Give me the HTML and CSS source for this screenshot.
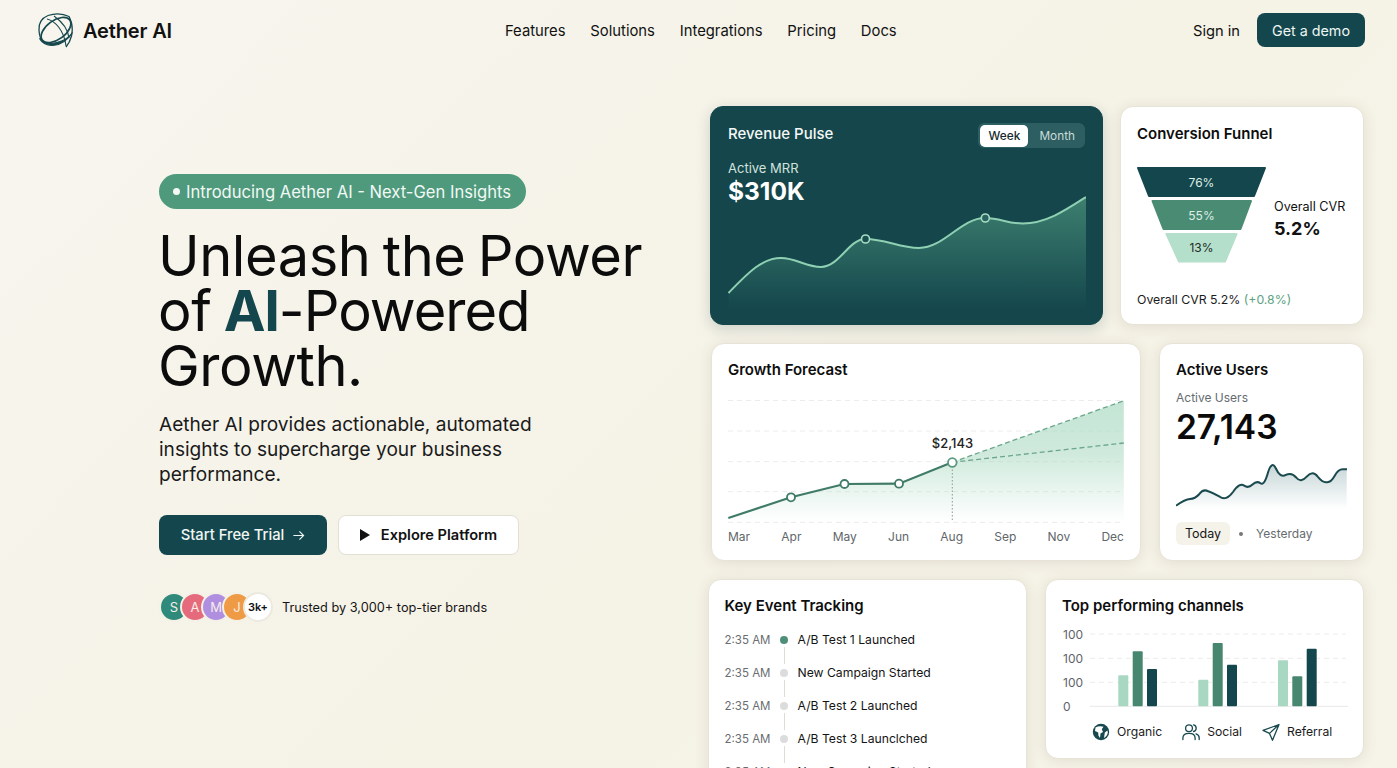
FILE: index.html
```html
<!DOCTYPE html>
<html lang="en">
<head>
<meta charset="utf-8">
<title>Aether AI</title>
<link rel="stylesheet" href="styles.css">
</head>
<body>
<div class="page">
  <header class="topbar">
    <a class="brand">
      <svg class="brand-mark" viewBox="0 0 38 36" fill="none" stroke="#17484e">
        <path d="M11 3.500C5 6 1.500 11 2 18C2.200 22 3 26 5 29" stroke-width="1.300"/>
        <path d="M11 3.500C17 1.500 25 1 32 4.500C35 10 36 17 34.500 24C33.500 28 31.500 32 29 35" stroke-width="1.300"/>
        <ellipse cx="19" cy="18" rx="17" ry="9.500" stroke-width="1.700" transform="rotate(-36 19 18)"/>
        <path d="M10 7C18 9 27 18 29 34M17 4C24 9 31 17 32 26" stroke-width="1.100"/>
        <path d="M2.500 26.500C8 36 25 37 35.500 20.500C28 31 13 33.500 6 29.500Z" fill="#17484e" stroke-width="1.200"/>
      </svg>
      <span class="brand-name">Aether AI</span>
    </a>
    <nav class="nav">
      <a>Features</a><a>Solutions</a><a>Integrations</a><a>Pricing</a><a>Docs</a>
    </nav>
    <div class="top-actions">
      <a class="signin">Sign in</a>
      <a class="demo">Get a demo</a>
    </div>
  </header>

  <main class="main">
    <section class="hero">
      <div class="pill"><span class="pill-dot"></span>Introducing Aether AI - Next-Gen Insights</div>
      <h1 class="headline">Unleash the Power<br>of <strong>AI</strong><span class="tight">-Powered</span><br>Growth.</h1>
      <p class="lede">Aether AI provides actionable, automated insights to supercharge your business performance.</p>
      <div class="cta">
        <a class="btn btn-dark">Start Free Trial
          <svg class="btn-arrow" viewBox="0 0 14 14" fill="none" stroke="currentColor" stroke-width="1.2"><path d="M1.5 7h11M8 2.500 12.500 7 8 11.500"/></svg>
        </a>
        <a class="btn btn-light">
          <svg class="btn-play" viewBox="0 0 10 12"><path d="M0 0l10 6-10 6z" fill="#111"/></svg>
          Explore Platform</a>
      </div>
      <div class="trust">
        <div class="avatars">
          <span class="avatar av-s">S</span><span class="avatar av-a">A</span><span class="avatar av-m">M</span><span class="avatar av-j">J</span><span class="avatar av-more">3k+</span>
        </div>
        <span class="trust-text">Trusted by 3,000+ top-tier brands</span>
      </div>
    </section>

    <section class="board">
      <div class="row row-1">
        <article class="card card-dark">
          <div class="rev-head">
            <h2 class="card-title">Revenue Pulse</h2>
            <div class="toggle"><span class="toggle-on">Week</span><span class="toggle-off">Month</span></div>
          </div>
          <div class="rev-label">Active MRR</div>
          <div class="rev-value">$310K</div>
          <svg class="rev-chart" viewBox="727 190 358 125" fill="none">
            <defs>
              <linearGradient id="revFill" x1="0" y1="0" x2="0" y2="1">
                <stop offset="0" stop-color="#5fae8c" stop-opacity=".55"/>
                <stop offset="1" stop-color="#5fae8c" stop-opacity="0"/>
              </linearGradient>
            </defs>
            <path fill="url(#revFill)" d="M727.5 293C745 275 760 258 780 258C795 258 805 267 820 267C838 267 848 239 864.3 239C885 239 898 248 918 248C943 248 960 218 984 218C1000 218 1005 223.5 1021.7 223.5C1045 223.5 1065 210 1085 197V310H727.5Z"/>
            <path stroke="#8fd0b3" stroke-width="2" d="M727.5 293C745 275 760 258 780 258C795 258 805 267 820 267C838 267 848 239 864.3 239C885 239 898 248 918 248C943 248 960 218 984 218C1000 218 1005 223.5 1021.7 223.5C1045 223.5 1065 210 1085 197"/>
            <circle cx="864.5" cy="239" r="4" fill="#17504f" stroke="#a8dcc4" stroke-width="1.6"/>
            <circle cx="984.3" cy="218" r="4" fill="#2a6360" stroke="#a8dcc4" stroke-width="1.6"/>
          </svg>
        </article>
        <article class="card card-funnel">
          <h2 class="card-title">Conversion Funnel</h2>
          <div class="funnel-body">
            <svg class="funnel" viewBox="1136 166 131 97">
              <path class="fn-1" d="M1138 168H1265L1254 196H1149Z"/>
              <path class="fn-2" d="M1152.500 201H1251L1240.500 229H1163.500Z"/>
              <path class="fn-3" d="M1166.500 234H1236.500L1225 261.500H1179Z"/>
              <text class="fn-text fn-light" x="1201.500" y="186.500">76%</text>
              <text class="fn-text fn-light" x="1201.500" y="219.500">55%</text>
              <text class="fn-text" x="1201.500" y="252">13%</text>
            </svg>
            <div class="funnel-side">
              <div class="funnel-side-label">Overall CVR</div>
              <div class="funnel-side-value">5.2%</div>
            </div>
          </div>
          <div class="funnel-foot">Overall CVR 5.2% <span class="up">(+0.8%)</span></div>
        </article>
      </div>

      <div class="row row-2">
        <article class="card card-forecast">
          <h2 class="card-title">Growth Forecast</h2>
          <svg class="fc-chart" viewBox="728 396 396 128" fill="none">
            <defs>
              <linearGradient id="fcFill" gradientUnits="userSpaceOnUse" x1="0" y1="400" x2="0" y2="522">
                <stop offset="0" stop-color="#a9d9c1" stop-opacity=".7"/>
                <stop offset=".45" stop-color="#a9d9c1" stop-opacity=".55"/>
                <stop offset="1" stop-color="#a9d9c1" stop-opacity="0"/>
              </linearGradient>
            </defs>
            <g class="fc-grid">
              <path d="M728 400.500H1124M728 431H1124M728 461.700H1124M728 491.700H1124M728 522.300H1124"/>
            </g>
            <path fill="url(#fcFill)" d="M728.300 518L791 497.300L844.300 484L899 483.700L952.300 462.300L1123.800 400.700V522.300H728.300Z"/>
            <path stroke="#6aa68c" stroke-width="1.300" stroke-dasharray="5 3" d="M952.300 462.300L1123.800 400.700M952.300 462.300L1123.800 443"/>
            <path stroke="#8b9a94" stroke-width="1" stroke-dasharray="1.500 2" d="M952.300 466V522"/>
            <path stroke="#3f7b67" stroke-width="2.200" d="M728.300 518L791 497.300L844.300 484L899 483.700L952.300 462.300"/>
            <circle class="fc-dot" cx="791" cy="497.300" r="4"/>
            <circle class="fc-dot" cx="844.500" cy="484" r="4"/>
            <circle class="fc-dot" cx="899" cy="483.700" r="4"/>
            <circle class="fc-dot fc-dot-end" cx="952.300" cy="462.500" r="4.300"/>
            <text class="fc-note" x="952.500" y="447.500">$2,143</text>
          </svg>
          <div class="fc-axis">
            <span>Mar</span><span>Apr</span><span>May</span><span>Jun</span><span>Aug</span><span>Sep</span><span>Nov</span><span>Dec</span>
          </div>
        </article>
        <article class="card card-users">
          <h2 class="card-title">Active Users</h2>
          <div class="users-label">Active Users</div>
          <div class="users-value">27,143</div>
          <svg class="users-chart" viewBox="1176 460 171 50" fill="none">
            <defs>
              <linearGradient id="usersFill" x1="0" y1="0" x2="0" y2="1">
                <stop offset="0" stop-color="#1d5a5e" stop-opacity=".25"/>
                <stop offset="1" stop-color="#1d5a5e" stop-opacity="0"/>
              </linearGradient>
            </defs>
            <path fill="url(#usersFill)" d="M1176.700 503.300Q1185 497.300 1190 497Q1195 496.700 1199.200 492.200Q1203.300 486.500 1208.300 489.300Q1213.300 491 1219.700 494.700Q1226 499.500 1233 490Q1240 480 1244.200 483.700Q1248.300 486.500 1252.500 482.500Q1256.700 478.500 1260.500 481.300Q1264.300 484 1268 470.600Q1271.700 458 1275.900 466.500Q1280 476 1285.900 472.900Q1291.700 470 1296.200 475.500Q1300.700 481.500 1306.700 474.700Q1312.700 468 1317.700 474.700Q1322.700 481 1326.900 480.200Q1331 480.500 1334.700 473.700Q1338.300 467.300 1342.500 467.300L1346.700 467.300V507H1176.700Z"/>
            <path stroke="#1a4a4f" stroke-width="2" stroke-linecap="round" d="M1176.700 503.300Q1185 497.300 1190 497Q1195 496.700 1199.200 492.200Q1203.300 486.500 1208.300 489.300Q1213.300 491 1219.700 494.700Q1226 499.500 1233 490Q1240 480 1244.200 483.700Q1248.300 486.500 1252.500 482.500Q1256.700 478.500 1260.500 481.300Q1264.300 484 1268 470.600Q1271.700 458 1275.900 466.500Q1280 476 1285.900 472.900Q1291.700 470 1296.200 475.500Q1300.700 481.500 1306.700 474.700Q1312.700 468 1317.700 474.700Q1322.700 481 1326.900 480.200Q1331 480.500 1334.700 473.700Q1338.300 467.300 1342.500 467.300L1346.700 467.300"/>
          </svg>
          <div class="users-tabs">
            <span class="chip">Today</span><span class="tab-dot"></span><span class="tab-off">Yesterday</span>
          </div>
        </article>
      </div>

      <div class="row row-3">
        <article class="card card-events">
          <h2 class="card-title">Key Event Tracking</h2>
          <ul class="events">
            <li class="event event-on"><span class="ev-time">2:35 AM</span><span class="ev-dot"></span><span class="ev-name">A/B Test 1 Launched</span></li>
            <li class="event"><span class="ev-time">2:35 AM</span><span class="ev-dot"></span><span class="ev-name">New Campaign Started</span></li>
            <li class="event"><span class="ev-time">2:35 AM</span><span class="ev-dot"></span><span class="ev-name">A/B Test 2 Launched</span></li>
            <li class="event"><span class="ev-time">2:35 AM</span><span class="ev-dot"></span><span class="ev-name">A/B Test 3 Launclched</span></li>
            <li class="event"><span class="ev-time">2:35 AM</span><span class="ev-dot"></span><span class="ev-name">New Campaign Started</span></li>
          </ul>
        </article>
        <article class="card card-channels">
          <h2 class="card-title">Top performing channels</h2>
          <svg class="ch-chart" viewBox="1061 626 290 86">
            <path class="ch-grid" d="M1089 634H1345M1089 658.300H1345M1089 682.300H1345"/>
            <path class="ch-base" d="M1089 706.300H1347"/>
            <text class="ch-y" x="1062" y="638.500">100</text>
            <text class="ch-y" x="1062" y="662.500">100</text>
            <text class="ch-y" x="1062" y="686.500">100</text>
            <text class="ch-y" x="1062" y="710.500">0</text>
            <rect class="b1" x="1117.300" y="675.300" width="10" height="31" rx="1"/>
            <rect class="b2" x="1131.700" y="651.300" width="10" height="55" rx="1"/>
            <rect class="b3" x="1146" y="669" width="10" height="37.300" rx="1"/>
            <rect class="b1" x="1197.300" y="679.700" width="10" height="26.600" rx="1"/>
            <rect class="b2" x="1211.700" y="643" width="10" height="63.300" rx="1"/>
            <rect class="b3" x="1226" y="664.700" width="10" height="41.600" rx="1"/>
            <rect class="b1" x="1277" y="660.300" width="10" height="46" rx="1"/>
            <rect class="b2" x="1291.300" y="676.300" width="10" height="30" rx="1"/>
            <rect class="b3" x="1305.700" y="648.700" width="10" height="57.600" rx="1"/>
          </svg>
          <div class="legend">
            <span class="legend-item">
              <svg class="legend-icon" viewBox="0 0 18 18"><circle cx="9" cy="9" r="8.200" fill="#17494f"/><path d="M3.500 4.500C6 3 9 2.800 11.500 3.800L9.800 6.200L11 9L8.500 10.500L8 15L6.400 12.500L6.200 9.500L3 8Z M12.800 9.500L15.500 7.500L15.800 9.500C15.500 12 14 14 12 15Z" fill="#fff"/></svg>
              Organic</span>
            <span class="legend-item">
              <svg class="legend-icon" viewBox="0 0 18 18" fill="none" stroke="#17494f" stroke-width="1.300" stroke-linecap="round"><circle cx="7" cy="5.200" r="3.400"/><path d="M.9 16.500v-1.600c0-2.700 2.300-4.500 6.100-4.500s6.100 1.800 6.100 4.500v1.600"/><path d="M11.600 1.900a3.400 3.400 0 0 1 0 6.600M14 10.800c2 .6 3.200 2 3.200 4v1.700"/></svg>
              Social</span>
            <span class="legend-item">
              <svg class="legend-icon" viewBox="0 0 18 18" fill="none" stroke="#17494f" stroke-width="1.300" stroke-linejoin="round"><path d="M17 1.500 1 7.400l6.500 3 3 6.800zM7.500 10.400 17 1.500"/></svg>
              Referral</span>
          </div>
        </article>
      </div>
    </section>
  </main>
</div>
</body>
</html>
```
FILE: styles.css
```css
* { box-sizing: border-box; }
html, body { margin: 0; padding: 0; }
body {
  font-family: "Inter", "Liberation Sans", sans-serif;
  color: #111;
  background: #f6f3e8;
}
.page {
  width: 1397px;
  height: 768px;
  overflow: hidden;
  background: linear-gradient(135deg, #f7f5ee 0%, #f5f2e6 55%, #f6f3e8 100%);
}
a { color: inherit; text-decoration: none; }

/* top bar */
.topbar {
  display: flex;
  align-items: center;
  height: 60px;
  padding: 0 32px 0 37px;
}
.brand { display: flex; align-items: center; gap: 8px; }
.brand-mark { width: 38px; height: 36px; }
.brand-name { margin-top: 1px; font-size: 20px; font-weight: 600; letter-spacing: -.15px; }
.nav { display: flex; gap: 24.8px; margin: 1px 0 0 333px; font-size: 14.8px; }
.top-actions { display: flex; align-items: center; gap: 17px; margin-left: auto; font-size: 14.7px; }
.signin { margin-top: 1px; }
.demo {
  display: flex;
  align-items: center;
  justify-content: center;
  width: 108px;
  height: 34px;
  border-radius: 8px;
  background: #14474d;
  color: #eef5f2;
  font-size: 14.3px;
}

/* layout */
.main { display: flex; }
.hero { width: 707.5px; padding: 114px 0 0 159px; }
.board { width: 656.5px; padding-top: 46px; display: flex; flex-direction: column; gap: 18px; }
.row { display: flex; }
.row-1 { height: 219px; gap: 17px; margin-left: 2.5px; }
.row-2 { height: 218px; gap: 18px; margin-left: 3.5px; }
.row-3 { height: 180px; gap: 18px; }

/* hero */
.pill {
  display: flex;
  align-items: center;
  width: 367px;
  height: 35px;
  padding-left: 14px;
  border-radius: 18px;
  background: #4f9a7d;
  color: #f2f8f4;
  font-size: 16.6px;
}
.pill-dot { width: 7px; height: 7px; margin-right: 6px; border-radius: 50%; background: #f4f9f6; }
.headline {
  margin: 20px 0 0 -1px;
  font-size: 56px;
  line-height: 55px;
  font-weight: 400;
  letter-spacing: -.45px;
  word-spacing: -3px;
  color: #0c0c0c;
}
.headline strong { font-weight: 700; letter-spacing: -1.2px; color: #14474d; }
.tight { letter-spacing: -.95px; }
.lede { width: 385px; margin: 18px 0 0; font-size: 19.1px; line-height: 25px; color: #1a1a1a; }
.cta { display: flex; gap: 11px; margin-top: 28px; }
.btn {
  display: flex;
  align-items: center;
  justify-content: center;
  height: 40px;
  border-radius: 8px;
  font-size: 14.8px;
  font-weight: 500;
}
.btn-dark { width: 168px; gap: 8px; background: #14474d; color: #f0f6f3; }
.btn-light { width: 181px; gap: 11px; background: #fff; border: 1px solid #e2dfd3; color: #111; font-weight: 600; font-size: 14.6px; }
.btn-arrow { width: 13px; height: 13px; }
.btn-play { width: 10px; height: 12px; }
.trust { display: flex; align-items: center; gap: 9px; margin-top: 37px; }
.avatars { display: flex; }
.avatar {
  display: flex;
  align-items: center;
  justify-content: center;
  width: 30px;
  height: 30px;
  margin-right: -9px;
  border: 2px solid #f4f1e6;
  border-radius: 50%;
  color: #f6eee8;
  font-size: 13px;
}
.av-s { background: #2f8a7c; }
.av-a { background: #e56b7c; }
.av-m { background: #b08fe0; }
.av-j { background: #ef9a45; }
.av-more { margin-right: 0; background: #fff; border-color: #eceae0; color: #111; font-size: 11px; font-weight: 600; }
.trust-text { font-size: 12.75px; color: #151515; }

/* cards */
.card {
  border: 1px solid #e7e3d7;
  border-radius: 13px;
  background: #fff;
  box-shadow: 0 2px 14px rgba(90, 85, 60, .12);
  padding: 16px 16px;
}
.card-title { margin: 0; font-size: 15px; line-height: 20px; font-weight: 600; color: #0e0e0e; }

.card-dark { width: 393px; padding: 17px 17px 0; background: #14464c; border-color: #14464c; color: #f2f7f4; box-shadow: 0 4px 14px rgba(20, 60, 60, .18); }
.card-dark .card-title { color: #f4f8f6; font-weight: 500; }
.rev-head { display: flex; justify-content: space-between; align-items: flex-start; }
.toggle {
  display: flex;
  align-items: center;
  height: 25px;
  margin-top: -1px;
  padding: 0 2px;
  border-radius: 6px;
  background: #2d5e62;
  font-size: 11.8px;
}
.toggle-on { display: flex; align-items: center; justify-content: center; width: 48px; height: 22px; border-radius: 5px; background: #fff; color: #16292c; font-weight: 500; }
.toggle-off { padding: 0 8px 0 11px; color: #c9dcd8; }
.rev-label { margin-top: 11px; font-size: 13px; line-height: 18px; color: #d3e2dd; }
.rev-value { margin-top: -1px; font-size: 24.5px; line-height: 30px; font-weight: 700; color: #fff; }
.rev-chart { display: block; width: 358px; height: 125px; margin-top: -16px; }

.card-funnel { width: 244px; padding-top: 17px; }
.funnel-body { display: flex; align-items: center; gap: 7px; margin-top: 22px; }
.funnel { display: block; width: 131px; height: 97px; flex: none; margin-left: -1px; }
.fn-1, .fn-2, .fn-3 { stroke-linejoin: round; stroke-width: 2; }
.fn-1 { fill: #14474d; stroke: #14474d; }
.fn-2 { fill: #4a8c73; stroke: #4a8c73; }
.fn-3 { fill: #b4dfca; stroke: #b4dfca; }
.fn-text { font-size: 12px; text-anchor: middle; fill: #1c2b28; }
.fn-light { fill: #dfeee7; }
.funnel-side { margin-top: 8px; white-space: nowrap; }
.funnel-side-label { font-size: 12.6px; line-height: 18px; }
.funnel-side-value { margin-top: 2px; font-size: 18px; line-height: 22px; font-weight: 700; }
.funnel-foot { margin-top: 28px; font-size: 12.3px; line-height: 18px; color: #1c1c1c; }
.up { color: #5da283; }

.card-forecast { width: 430px; }
.fc-chart { display: block; width: 396px; height: 128px; margin-top: 16px; }
.fc-grid path { stroke: #ececec; stroke-width: 1; stroke-dasharray: 5 4; }
.fc-dot { fill: #fff; stroke: #3f7b67; stroke-width: 1.800; }
.fc-dot-end { stroke: #5c9a80; }
.fc-note { font-size: 13px; font-weight: 500; text-anchor: middle; fill: #222; }
.fc-axis { display: flex; justify-content: space-between; margin-top: 5px; font-size: 12px; line-height: 16px; color: #60666a; }

.card-users { width: 205px; }
.users-label { margin-top: 10px; font-size: 12px; line-height: 16px; color: #656b70; }
.users-value { margin-top: 1px; font-size: 33.5px; line-height: 40px; font-weight: 600; color: #0a0a0a; }
.users-chart { display: block; width: 171px; height: 50px; margin-top: 15px; }
.users-tabs { display: flex; align-items: center; margin-top: 10px; font-size: 12.5px; }
.chip { padding: 4px 9px; border-radius: 6px; background: #f5f2ea; color: #151515; line-height: 15px; }
.tab-dot { width: 4px; height: 4px; margin: 0 13px 0 9px; border-radius: 50%; background: #777; }
.tab-off { color: #666b6f; font-size: 12px; }

.card-events { width: 319.5px; height: 230px; }
.events { list-style: none; margin: 7px 0 0; padding: 0; }
.event { position: relative; display: flex; align-items: center; height: 33px; font-size: 12.2px; }
.ev-time { width: 55px; color: #6a6d70; font-size: 11.5px; }
.ev-dot { width: 8px; height: 8px; margin-right: 10px; border-radius: 50%; background: #dcdcdc; }
.event-on .ev-dot { background: #4f8f78; }
.event::after {
  content: "";
  position: absolute;
  left: 59px;
  top: 24px;
  width: 1px;
  height: 17px;
  background: #dedcd6;
}
.ev-name { color: #141414; }

.card-channels { width: 319px; height: 180px; }
.ch-chart { display: block; width: 290px; height: 86px; margin-top: 10px; }
.ch-grid { stroke: #ececec; stroke-width: 1; stroke-dasharray: 5 4; fill: none; }
.ch-base { stroke: #e8e8e8; stroke-width: 1; fill: none; }
.ch-y { font-size: 12px; fill: #5f6468; }
.b1 { fill: #a9d8c2; }
.b2 { fill: #47866f; }
.b3 { fill: #14474d; }
.legend { display: flex; gap: 20px; margin-top: 11px; padding-left: 30px; font-size: 12.2px; }
.legend-item { display: flex; align-items: center; gap: 7px; color: #1b1b1b; line-height: 18px; }
.legend-icon { width: 18px; height: 18px; }
```
